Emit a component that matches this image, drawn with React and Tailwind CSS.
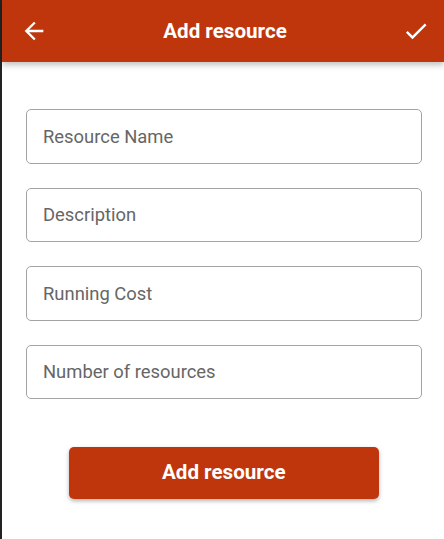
import React from 'react';

const fields = ['Resource Name', 'Description', 'Running Cost', 'Number of resources'];

const App = () => {
    return (
        <div className="flex h-[539px] w-[444px] overflow-hidden bg-white" style={{ fontFamily: 'Roboto, "Liberation Sans", sans-serif' }}>
            {/* dark edge on the left */}
            <div className="w-[2px] shrink-0 bg-[#232323]"></div>

            <div className="flex flex-1 flex-col">
                <header className="relative z-10 flex h-[62px] shrink-0 items-center justify-between bg-[#bf360c] pl-[18px] pr-[14px] shadow-[0_3px_6px_rgba(0,0,0,0.25)]">
                    <svg width="28" height="28" viewBox="0 0 24 24" fill="#ffffff">
                        <path d="M20 11H7.83l5.59-5.59L12 4l-8 8 8 8 1.41-1.41L7.83 13H20v-2z" />
                    </svg>
                    <h1 className="text-[20.6px] font-bold text-white">Add resource</h1>
                    <svg width="28" height="28" viewBox="0 0 24 24" fill="#ffffff">
                        <path d="M9 16.17L4.83 12l-1.42 1.41L9 19 21 7l-1.41-1.41z" />
                    </svg>
                </header>

                <main className="flex flex-col pl-[23.5px] pr-[22px] pt-[47px]">
                    <div className="flex flex-col gap-[24px]">
                        {fields.map((label) => (
                            <input
                                key={label}
                                placeholder={label}
                                className="h-[54.5px] w-full rounded-[5px] border border-[#a3a3a3] bg-white pl-[16.5px] text-[18.4px] text-[#333] outline-none placeholder:text-[#666]"
                            />
                        ))}
                    </div>

                    <div className="flex justify-center pt-[48px]">
                        <button className="h-[51.5px] w-[310px] rounded-[5px] bg-[#bf360c] text-[20.6px] font-bold text-white shadow-[0_2px_4px_rgba(0,0,0,0.3)]">
                            Add resource
                        </button>
                    </div>
                </main>
            </div>
        </div>
    );
};

export default App;
